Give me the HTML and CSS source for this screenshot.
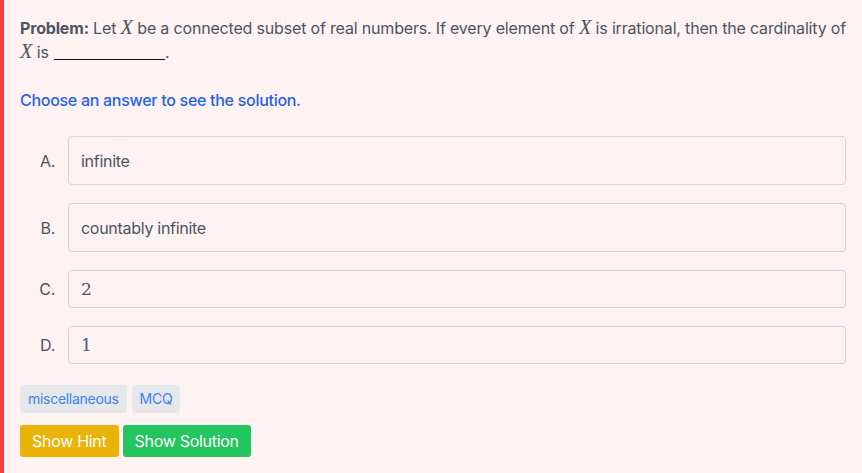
FILE: index.html
```html
<!DOCTYPE html>
<html>
<head>
<meta charset="utf-8">
<link rel="stylesheet" href="styles.css">
</head>
<body>
<div class="card">
  <p class="problem"><strong>Problem:</strong> Let <span class="math">X</span> be a connected subset of real numbers. If every element of <span class="math">X</span> is irrational, then the cardinality of <span class="math">X</span> is <span class="blank"></span>.</p>
  <p class="prompt">Choose an answer to see the solution.</p>
  <div class="options">
    <div class="option">
      <span class="label">A.</span>
      <div class="box tall">infinite</div>
    </div>
    <div class="option">
      <span class="label">B.</span>
      <div class="box tall">countably infinite</div>
    </div>
    <div class="option">
      <span class="label">C.</span>
      <div class="box short"><span class="num">2</span></div>
    </div>
    <div class="option">
      <span class="label">D.</span>
      <div class="box short"><span class="num">1</span></div>
    </div>
  </div>
  <div class="tags">
    <span class="tag">miscellaneous</span>
    <span class="tag">MCQ</span>
  </div>
  <div class="buttons">
    <button class="btn hint">Show Hint</button>
    <button class="btn solution">Show Solution</button>
  </div>
</div>
</body>
</html>
```
FILE: styles.css
```css
html, body {
  margin: 0;
  padding: 0;
  background: #fef2f2;
}
body {
  font-family: Inter, "Liberation Sans", Arial, sans-serif;
  font-size: 16px;
  line-height: 24px;
  letter-spacing: -0.018em;
  color: #4b5563;
}
.card {
  border-left: 4px solid #ef4444;
  background: #fef2f2;
  padding: 16px 16px 16px 16px;
  min-height: 441px;
}
.problem {
  margin: 0;
  letter-spacing: -0.011em;
}
.problem strong {
  font-weight: 700;
}
.math {
  font-family: "Liberation Serif", "Times New Roman", serif;
  font-style: italic;
  font-size: 1.27em;
  line-height: 1;
  letter-spacing: 0;
}
.blank {
  display: inline-block;
  width: 111px;
  border-bottom: 1px solid #111;
  vertical-align: -2px;
  margin-left: 1px;
}
.prompt {
  margin: 24px 0 0;
  color: #2563eb;
  font-weight: 500;
}
.options {
  margin-top: 24px;
  display: flex;
  flex-direction: column;
  gap: 18px;
}
.option {
  display: flex;
  align-items: center;
}
.label {
  width: 35px;
  text-align: right;
  margin-right: 13px;
  flex: none;
}
.box {
  flex: 1;
  border: 1px solid #d1d5db;
  border-radius: 4px;
  padding: 0 12px;
  display: flex;
  align-items: center;
  box-sizing: border-box;
}
.box.tall {
  height: 49px;
}
.box.short {
  height: 38px;
}
.num {
  font-family: "DejaVu Serif", "Liberation Serif", serif;
  font-size: 17px;
  letter-spacing: 0;
}
.tags {
  margin-top: 21px;
  display: flex;
  gap: 5px;
}
.tag {
  background: #e5e7eb;
  color: #3b82f6;
  font-size: 14px;
  line-height: 20px;
  padding: 4px 8px;
  border-radius: 4px;
}
.buttons {
  margin-top: 12px;
  display: flex;
  gap: 4px;
}
.btn {
  border: none;
  color: #fff;
  font-family: Inter, "Liberation Sans", Arial, sans-serif;
  font-size: 16px;
  line-height: 24px;
  letter-spacing: -0.018em;
  padding: 4px 12px;
  border-radius: 3px;
}
.hint {
  background: #eab308;
}
.solution {
  background: #22c55e;
}
```
